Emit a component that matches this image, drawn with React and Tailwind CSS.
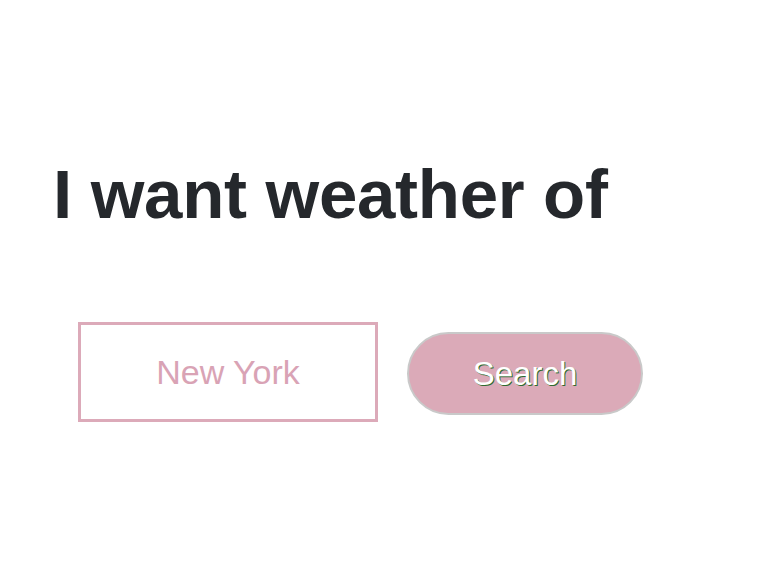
const App = function() {
    return (
        <div className="min-h-screen bg-white font-['Liberation_Sans',Arial,sans-serif]">
            <div className="pt-[160px] pl-[53px]">
                <h1 className="text-[69px] leading-none font-bold tracking-[-0.3px] text-[#25282c]">
                    I want weather of
                </h1>
            </div>

            <div className="mt-[93px] pl-[78px] flex items-center gap-[29px]">
                <input
                    type="text"
                    placeholder="New York"
                    className="w-[300px] h-[100px] border-[3px] border-[#dcaab9] bg-white text-center text-[34px] text-[#d9a3b5] placeholder:text-[#d9a3b5] outline-none"
                />
                <button className="w-[236px] h-[83px] mt-[3px] rounded-full bg-[#dbaab8] border-2 border-[#c9c9c9] text-white text-[33px] [text-shadow:1px_1px_0_#2f6a30]">
                    Search
                </button>
            </div>
        </div>
    );
};

export default App;
